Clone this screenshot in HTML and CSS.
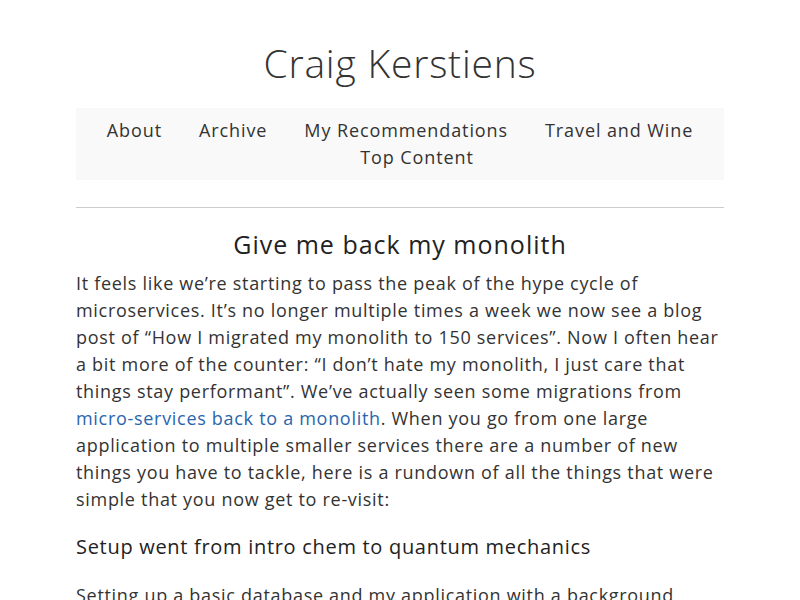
FILE: index.html
```html
<!DOCTYPE html>
<html lang="en">
<head>
<meta charset="utf-8">
<title>Craig Kerstiens</title>
<link rel="stylesheet" href="styles.css">
</head>
<body>
<div class="page">
  <header class="site-header">
    <h1 class="site-title">Craig Kerstiens</h1>
    <nav class="nav">
      <a href="#">About</a>
      <a href="#">Archive</a>
      <a href="#">My Recommendations</a>
      <a href="#">Travel and Wine</a>
      <a href="#" class="nav-last">Top Content</a>
    </nav>
  </header>
  <hr class="rule">
  <article class="post">
    <h2 class="post-title">Give me back my monolith</h2>
    <p>It feels like we’re starting to pass the peak of the hype cycle of microservices. It’s no longer multiple times a week we now see a blog post of “How I migrated my monolith to 150 services”. Now I often hear a bit more of the counter: “I don’t hate my monolith, I just care that things stay performant”. We’ve actually seen some migrations from <a href="#" class="link">micro-services back to a monolith</a>. When you go from one large application to multiple smaller services there are a number of new things you have to tackle, here is a rundown of all the things that were simple that you now get to re-visit:</p>
    <h3 class="section-title">Setup went from intro chem to quantum mechanics</h3>
    <p>Setting up a basic database and my application with a background worker was a pretty straight forward process.</p>
  </article>
</div>
</body>
</html>
```

FILE: styles.css
```css
html, body {
  margin: 0;
  padding: 0;
  background: #fff;
}
body {
  font-family: "Open Sans", "DejaVu Sans", sans-serif;
  color: #333;
  font-size: 18px;
  line-height: 27px;
}
.page {
  width: 648px;
  margin: 0 auto;
}
.site-header {
  padding-top: 38px;
}
.site-title {
  margin: 0;
  text-align: center;
  font-weight: 300;
  font-size: 39px;
  line-height: 50px;
  letter-spacing: 0.8px;
  color: #333;
}
.nav {
  margin-top: 20px;
  background: #f9f9f9;
  padding: 9px 0 9px;
  display: flex;
  flex-wrap: wrap;
  justify-content: center;
  column-gap: 37px;
  letter-spacing: 0.9px;
}
.nav a {
  color: #333;
  text-decoration: none;
  white-space: nowrap;
}
.nav .nav-last {
  padding-left: 34px;
}
.rule {
  border: 0;
  border-top: 1px solid #ccc;
  margin: 27px 0 0;
}
.post-title {
  margin: 21px 0 11px;
  text-align: center;
  font-size: 25px;
  line-height: 30px;
  font-weight: 500;
  letter-spacing: 1px;
  color: #222;
}
.post p {
  margin: 0;
  letter-spacing: 0.7px;
}
.link {
  color: #2a66ad;
  text-decoration: none;
}
.section-title {
  margin: 19px 0 20px;
  font-size: 20px;
  line-height: 30px;
  font-weight: 500;
  letter-spacing: 0.7px;
  color: #222;
}
```
